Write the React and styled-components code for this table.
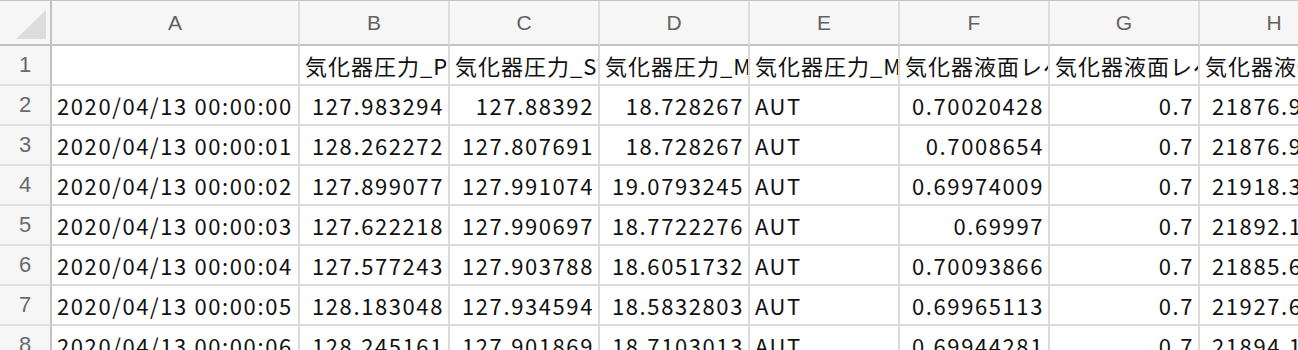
import React from 'react';
import styled, { createGlobalStyle } from 'styled-components';

const GlobalStyle = createGlobalStyle`
  body {
    margin: 0;
    background: #fff;
    font-family: 'Noto Sans CJK JP', 'Noto Sans', sans-serif;
  }
`;

const Viewport = styled.div`
  width: 1298px;
  height: 350px;
  overflow: hidden;
  border-top: 1px solid #c4c4c4;
  box-sizing: border-box;
`;

const Sheet = styled.div`
  display: grid;
  grid-template-columns: 52px 248px repeat(7, 150px);
  grid-template-rows: 45px;
  grid-auto-rows: 40px;
  width: max-content;
`;

const Corner = styled.div`
  position: relative;
  background: #f6f6f6;
  border-right: 2px solid #c2c2c2;
  border-bottom: 2px solid #c2c2c2;

  &::after {
    content: '';
    position: absolute;
    left: 16px;
    top: 9px;
    width: 30px;
    height: 29px;
    background: #dcdcdc;
    clip-path: polygon(100% 0, 100% 100%, 0 100%);
  }
`;

const ColHead = styled.div`
  background: #f6f6f6;
  border-right: 2px solid #dedede;
  border-bottom: 2px solid #c2c2c2;
  color: #626262;
  font-family: 'Liberation Sans', 'Noto Sans', sans-serif;
  font-size: 21px;
  line-height: 43px;
  text-align: center;
`;

const RowHead = styled.div`
  background: #f6f6f6;
  border-right: 2px solid #c2c2c2;
  border-bottom: 2px solid #dedede;
  color: #6a6a6a;
  font-family: 'Liberation Sans', 'Noto Sans', sans-serif;
  font-size: 22px;
  line-height: 38px;
  text-align: center;
`;

const Cell = styled.div`
  border-right: 2px solid #dadada;
  border-bottom: 2px solid #dadada;
  color: #111;
  font-size: 22px;
  line-height: 38px;
  letter-spacing: ${(p) => (p.$title ? '1px' : '1.6px')};
  padding: 0 4px 0 5px;
  white-space: nowrap;
  overflow: hidden;
  text-align: ${(p) => (p.$num ? 'right' : 'left')};
`;

const columns = ['A', 'B', 'C', 'D', 'E', 'F', 'G', 'H'];

// 1行目の見出し (セル幅で切れる)
const headers = [
  '',
  '気化器圧力_PV',
  '気化器圧力_SV',
  '気化器圧力_MV',
  '気化器圧力_MODE',
  '気化器液面レベル_PV',
  '気化器液面レベル_SV',
  '気化器液化ガス流量',
];

const rows = [
  ['2020/04/13 00:00:00', '127.983294', '127.88392', '18.728267', 'AUT', '0.70020428', '0.7', '21876.9125'],
  ['2020/04/13 00:00:01', '128.262272', '127.807691', '18.728267', 'AUT', '0.7008654', '0.7', '21876.9125'],
  ['2020/04/13 00:00:02', '127.899077', '127.991074', '19.0793245', 'AUT', '0.69974009', '0.7', '21918.3372'],
  ['2020/04/13 00:00:03', '127.622218', '127.990697', '18.7722276', 'AUT', '0.69997', '0.7', '21892.1847'],
  ['2020/04/13 00:00:04', '127.577243', '127.903788', '18.6051732', 'AUT', '0.70093866', '0.7', '21885.6203'],
  ['2020/04/13 00:00:05', '128.183048', '127.934594', '18.5832803', 'AUT', '0.69965113', '0.7', '21927.6418'],
  ['2020/04/13 00:00:06', '128.245161', '127.901869', '18.7103013', 'AUT', '0.69944281', '0.7', '21894.1536'],
];

const isNumber = (v) => /^-?\d+(\.\d+)?$/.test(v);

const App = () => {
  return (
    <Viewport>
      <GlobalStyle />
      <Sheet>
        <Corner />
        {columns.map((c) => (
          <ColHead key={c}>{c}</ColHead>
        ))}

        <RowHead>1</RowHead>
        {headers.map((h, i) => (
          <Cell key={i} $title>
            {h}
          </Cell>
        ))}

        {rows.map((row, r) => (
          <React.Fragment key={r}>
            <RowHead>{r + 2}</RowHead>
            {row.map((v, i) => (
              <Cell key={i} $num={isNumber(v)}>
                {v}
              </Cell>
            ))}
          </React.Fragment>
        ))}
      </Sheet>
    </Viewport>
  );
};

export default App;
